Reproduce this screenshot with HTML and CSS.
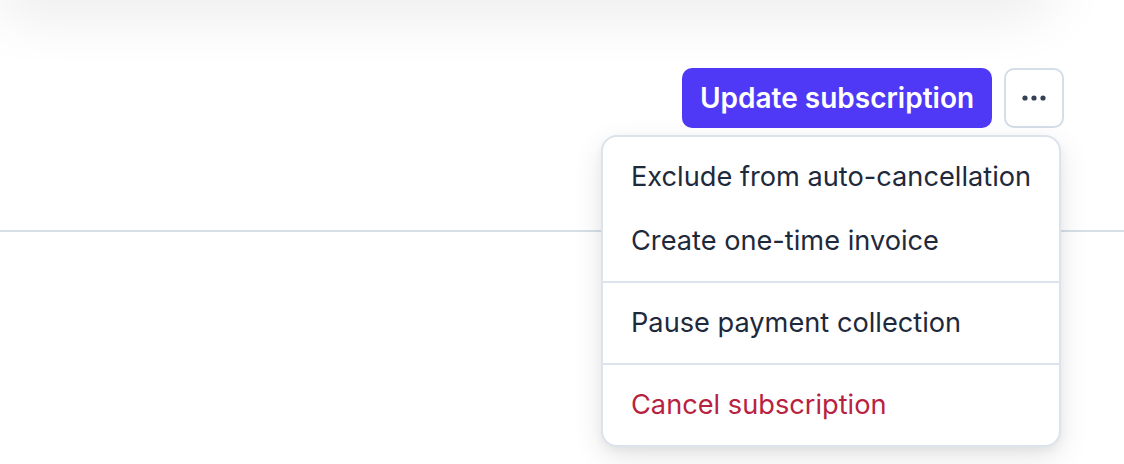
FILE: index.html
```html
<!DOCTYPE html>
<html>
<head>
<meta charset="utf-8">
<link rel="stylesheet" href="styles.css">
</head>
<body>
<div class="top-card"></div>
<div class="actions">
  <button class="btn-primary">Update subscription</button>
  <div class="more-wrap">
    <button class="btn-more" aria-label="More">
      <svg width="24" height="8" viewBox="0 0 24 8"><circle cx="3" cy="4" r="2.6" fill="#334155"/><circle cx="12" cy="4" r="2.6" fill="#334155"/><circle cx="21" cy="4" r="2.6" fill="#334155"/></svg>
    </button>
    <div class="menu">
      <div class="group">
        <div class="item">Exclude from auto-cancellation</div>
        <div class="item">Create one-time invoice</div>
      </div>
      <div class="group">
        <div class="item">Pause payment collection</div>
      </div>
      <div class="group">
        <div class="item danger">Cancel subscription</div>
      </div>
    </div>
  </div>
</div>
<div class="rule"></div>
</body>
</html>
```
FILE: styles.css
```css
html, body {
  margin: 0;
  padding: 0;
  background: #ffffff;
  font-family: Inter, "Noto Sans", sans-serif;
  overflow: hidden;
}
body {
  width: 1124px;
  height: 464px;
}
.top-card {
  width: 1060px;
  height: 40px;
  margin-top: -40px;
  border-radius: 0 0 40px 0;
  background: #fff;
  box-shadow: 0 10px 60px rgba(0, 0, 0, 0.11);
}
.actions {
  display: flex;
  justify-content: flex-end;
  align-items: center;
  gap: 12px;
  padding-right: 60px;
  margin-top: 68px;
}
.btn-primary {
  height: 60px;
  width: 310px;
  padding: 0;
  border: none;
  border-radius: 10px;
  background: #4f39f6;
  color: #fff;
  font-family: Inter, "Noto Sans", sans-serif;
  font-size: 28px;
  font-weight: 600;
  white-space: nowrap;
  text-align: center;
}
.more-wrap {
  position: relative;
}
.btn-more {
  display: flex;
  align-items: center;
  justify-content: center;
  width: 60px;
  height: 60px;
  box-sizing: border-box;
  border: 2px solid #d4dde8;
  border-radius: 10px;
  background: #fff;
  padding: 0;
}
.menu {
  position: absolute;
  top: 67px;
  right: 3px;
  width: 460px;
  box-sizing: border-box;
  background: #fff;
  border: 2px solid #dbe3ec;
  border-radius: 16px;
  box-shadow: 0 10px 30px rgba(0, 0, 0, 0.10), 0 4px 10px rgba(0, 0, 0, 0.05);
  z-index: 2;
}
.group {
  padding: 8px 0;
}
.group + .group {
  border-top: 2px solid #dbe3ec;
}
.item {
  height: 64px;
  line-height: 64px;
  padding: 0 28px;
  font-size: 27.2px;
  color: #1e293b;
  white-space: nowrap;
}
.item.danger {
  color: #b8223f;
}
.rule {
  margin-top: 102px;
  border-top: 2px solid #d6dfe8;
}
```
